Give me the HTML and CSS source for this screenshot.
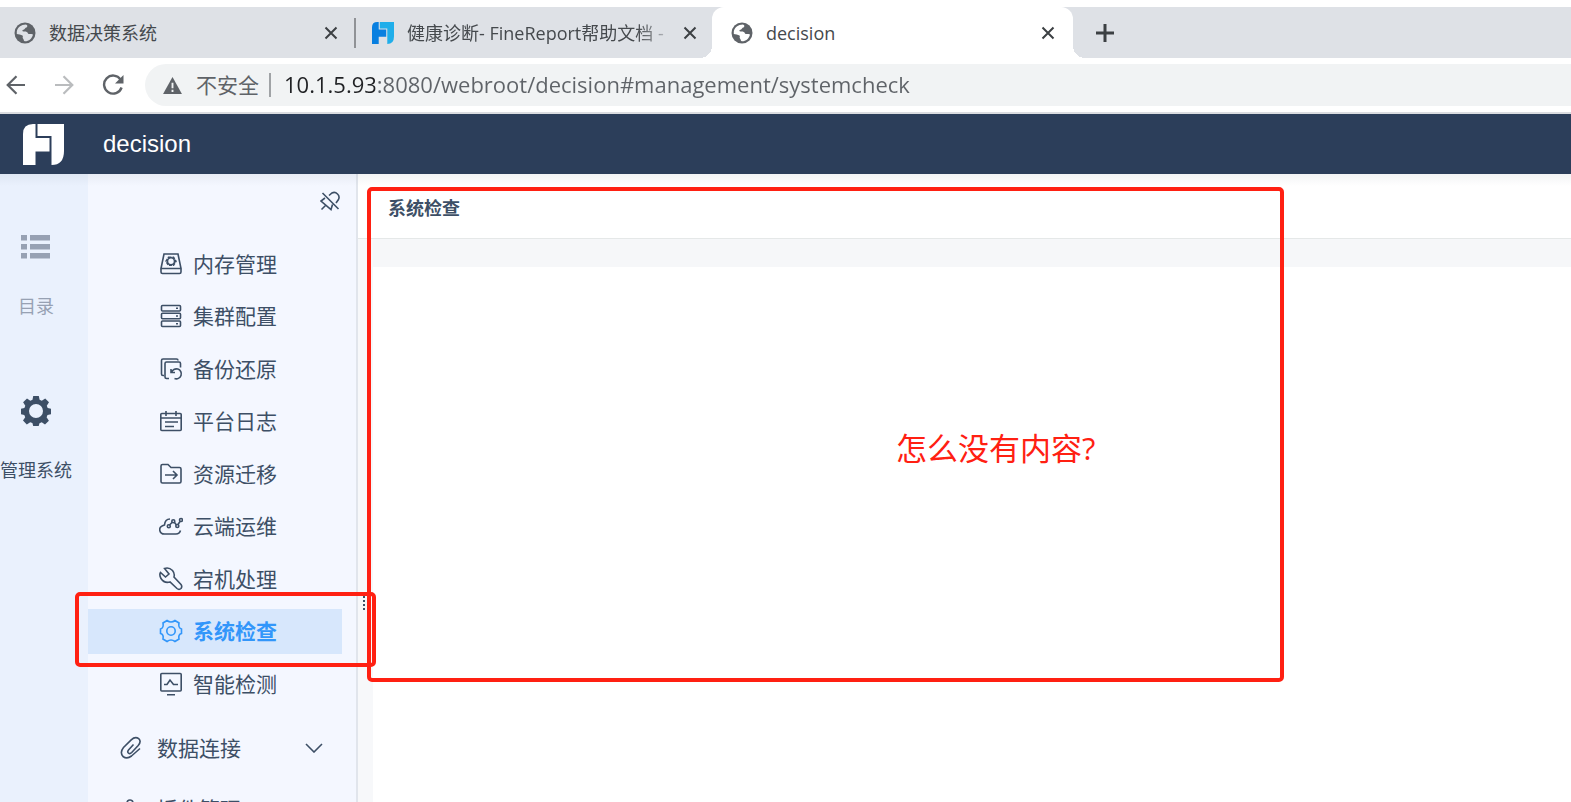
FILE: index.html
```html
<!DOCTYPE html>
<html lang="zh-CN">
<head>
<meta charset="utf-8">
<meta name="viewport" content="width=device-width, initial-scale=1">
<title>decision</title>
<link rel="stylesheet" href="styles.css">
</head>
<body>
<svg class="defs" aria-hidden="true">
  <symbol id="globe" viewBox="0 0 22 22">
    <circle cx="11" cy="11" r="10.5" fill="#5f6368"/>
    <path d="M2.800 9.500C3.500 5.500 7 2.600 12 2.600C14 3.500 13.500 5 12.500 5.500C11 5.500 11 7.500 9.500 7.800C8 8 8 9.300 9.500 9.600C11 9.200 13.500 9.500 14 11.500C14.500 12.500 17 11.500 19 12.500C18 16.500 15 19.300 11 19.300C9.500 19 10 17.500 9 16.500C8 15.500 9.500 14.500 8.500 13.500C7 12.500 4.500 12.500 2.800 12z" fill="var(--land)"/>
  </symbol>
  <symbol id="logo" viewBox="0 0 41 41">
    <path d="M12.500 0v14h14v13.500H12.500V41H0V10Q0 0 10 0z" fill="var(--logo-a)"/>
    <path d="M14.500 0H41v27Q41 41 28.500 41V12H14.500z" fill="var(--logo-b)"/>
  </symbol>
  <symbol id="close" viewBox="0 0 14 14"><path d="M1.500 1.500l11 11m0-11l-11 11" fill="none" stroke="#3c4043" stroke-width="2"/></symbol>
</svg>

<div class="window">
  <div class="tabs" role="tablist">
    <div class="tab tab-divided" role="tab">
      <svg class="favicon"><use href="#globe"/></svg>
      <span class="tab-title">数据决策系统</span>
      <button class="tab-close" aria-label="关闭"><svg><use href="#close"/></svg></button>
    </div>
    <div class="tab" role="tab">
      <svg class="favicon favicon-brand"><use href="#logo"/></svg>
      <span class="tab-title tab-title-fade">健康诊断- FineReport帮助文档 -</span>
      <button class="tab-close" aria-label="关闭"><svg><use href="#close"/></svg></button>
    </div>
    <div class="tab tab-active" role="tab" aria-selected="true">
      <svg class="favicon"><use href="#globe"/></svg>
      <span class="tab-title">decision</span>
      <button class="tab-close" aria-label="关闭"><svg><use href="#close"/></svg></button>
    </div>
    <button class="tab-new" aria-label="新标签页"><svg viewBox="0 0 18 18"><path d="M9 0v18M0 9h18" fill="none" stroke="#3c4043" stroke-width="3"/></svg></button>
  </div>

  <div class="toolbar">
    <button class="nav-button" aria-label="后退"><svg viewBox="0 0 20 20"><path d="M19 10H2M10.500 1.200L1.700 10l8.800 8.800" fill="none" stroke="#5f6368" stroke-width="2.200"/></svg></button>
    <button class="nav-button" aria-label="前进"><svg viewBox="0 0 20 20"><path d="M1 10h17M9.500 1.200l8.800 8.800-8.800 8.800" fill="none" stroke="#babcbe" stroke-width="2.200"/></svg></button>
    <button class="nav-button" aria-label="刷新"><svg class="reload" viewBox="0 0 22 22"><path d="M18.600 5.600A9 9 0 1 0 19.600 13.500" fill="none" stroke="#5f6368" stroke-width="2.400"/><path d="M21.500 1v8.500H13z" fill="#5f6368"/></svg></button>
    <div class="address">
      <svg class="warning" viewBox="0 0 20 18"><path d="M10 0l10 18H0z" fill="#5f6368"/><path d="M10 6v6m0 1.500v2.500" stroke="#f1f3f4" stroke-width="2"/></svg>
      <span class="insecure">不安全</span>
      <input class="url" type="text" aria-label="地址" value="10.1.5.93:8080/webroot/decision#management/systemcheck">
    </div>
  </div>

  <header class="app-header">
    <svg class="app-logo"><use href="#logo"/></svg>
    <span class="app-name">decision</span>
  </header>

  <div class="app-body">
    <nav class="rail" aria-label="主导航">
      <button class="rail-item">
        <svg viewBox="0 0 30 30"><path d="M0 3h6v5.500H0zM9 3h20v5.500H9zM0 12h6v5.500H0zM9 12h20v5.500H9zM0 21h6v5.500H0zM9 21h20v5.500H9z" fill="#97a1b3"/></svg>
        <span>目录</span>
      </button>
      <button class="rail-item rail-item-current">
        <svg viewBox="0 0 30 30"><path fill-rule="evenodd" fill="#3d4f66" d="M12.200 0h5.600l.8 3.800 2.200.9 3.400-2.200 3.800 3.800-2.200 3.400.9 2.200 3.300.8v5.600l-3.500.8-.9 2.200 2.300 3.400-3.900 3.800-3.300-2.200-2.200.9-.8 2.800h-5.500l-.8-2.900-2.200-.9-3.400 2.200-3.800-3.800 2.200-3.300-.9-2.200L0 18.300v-5.500l3.400-.9.9-2.200-2.200-3.400L6 2.500l3.300 2.200 2.200-.9zM15 8a7 7 0 1 0 0 14a7 7 0 1 0 0-14z"/></svg>
        <span>管理系统</span>
      </button>
    </nav>

    <nav class="menu" aria-label="管理系统">
      <button class="unpin" aria-label="取消固定"><svg viewBox="0 0 20 20"><path d="M2.500 1.500l16 16M9 4l3-2.500q3-1.500 5.500 1t1 5.500L16 11.500M5 6.500L1 9.500l10 8.500 1.500-5M5.500 14l-4 4" /></svg></button>
      <ul class="submenu">
        <li><a href="#memory"><svg viewBox="0 0 24 24"><path d="M5 2h14l3 14.500H2zM2 16.500h20v3.500q0 1.500-1.500 1.500h-17Q2 21.500 2 20z"/><path d="M9.500 5.300h5l2.500 4-2.500 4h-5L7 9.300z" stroke-dasharray="3 1"/><circle cx="12" cy="9.300" r="3.500"/></svg>内存管理</a></li>
        <li><a href="#cluster"><svg viewBox="0 0 24 24"><rect x="2.500" y="1.500" width="19" height="5.500" rx="1"/><rect x="2.500" y="9.300" width="19" height="5.500" rx="1"/><rect x="2.500" y="17" width="19" height="5.500" rx="1"/><path d="M17 4.300h2M17 12h2M17 19.800h2"/></svg>集群配置</a></li>
        <li><a href="#backup"><svg viewBox="0 0 24 24"><path d="M5 18.500H4q-1.500 0-1.500-1.500V3.500Q2.500 2 4 2h13.500q1.500 0 1.500 1.500M10 21.500H7.500q-1.500 0-1.500-1.500V6.500Q6 5 7.500 5h12.500q1.500 0 1.500 1.500v4"/><path d="M12 12v3.500h4M12.500 15.500a5 5 0 1 1 3 6"/></svg>备份还原</a></li>
        <li><a href="#logs"><svg viewBox="0 0 24 24"><rect x="1.800" y="4.500" width="20.400" height="17" rx="1"/><path d="M2 9h20M7 2v5M17 2v5M6 13h13M6 17.500h9"/></svg>平台日志</a></li>
        <li><a href="#migrate"><svg viewBox="0 0 24 24"><path d="M3.500 2.500h5.500l3 3h8.500q1.500 0 1.500 1.500v12.500q0 1.500-1.500 1.500h-17Q2 21 2 19.500V4q0-1.500 1.500-1.500zM6 13h12M14 9l4 4-4 4"/></svg>资源迁移</a></li>
        <li><a href="#cloud"><svg viewBox="0 0 24 24"><path d="M11 5Q6 5 5.500 11Q0 12.500.8 16.500Q1.500 20 5.500 20H17q3.500 0 4.500-3.500M10.500 11l3-3M15.500 8.500l2 2.500M19 10.500l2-3"/><circle cx="9.800" cy="12.300" r="1.500"/><circle cx="14.300" cy="7.300" r="1.500"/><circle cx="18.300" cy="12" r="1.500"/><circle cx="22" cy="6" r="1.500"/></svg>云端运维</a></li>
        <li><a href="#crash"><svg viewBox="0 0 24 24"><path d="M5.500 1.500Q10 0 13.500 3.500Q16 6.500 15 10L22 17.500q1.500 2 0 4-2 1.700-4 0L11 15Q5 16.500 2 11.500Q0 8 1.500 5.500l5 4.500 3.500-3z"/></svg>宕机处理</a></li>
        <li><a class="current" href="#check" aria-current="page"><svg viewBox="0 0 24 24"><path d="M8 1.500Q12 4.500 16 1.500L20 4Q19 9 22.500 10V14.500Q19 15.500 20 20L16 22.500Q12 19.500 8 22.500L4 20Q5 15.500 1.500 14.500V10Q5 9 4 4z"/><circle cx="12" cy="12" r="4.200"/></svg>系统检查</a></li>
        <li><a href="#smart"><svg viewBox="0 0 24 24"><rect x="1.800" y="1.500" width="20.400" height="17.500" rx="1"/><path d="M8 22.700h8M5 12.500h3l3-4.500 3.500 4.500H19"/></svg>智能检测</a></li>
      </ul>
      <button class="group"><svg viewBox="0 0 24 24"><path d="M14.500 8.500l-5 5.500q-1.500 2 0 3.200 1.500 1 3.200-.7l6.500-7q3.500-4 .5-6.800-3.500-2.500-7.500 1.200L4.500 11.500Q.5 16.500 4 20.500q4 3 8.500-.5l8.500-7.500"/></svg><span>数据连接</span><svg class="chevron" viewBox="0 0 18 10"><path d="M1 1l8 8 8-8"/></svg></button>
      <button class="group"><svg viewBox="0 0 24 24"><path d="M8 6.500Q8 3 11 3t3 3.500h6V12M2 12V6.500h6M2 12v9h18v-9"/></svg><span>插件管理</span></button>
    </nav>

    <div class="splitter"><span class="grip"></span></div>
    <main class="content">
      <h1 class="content-title">系统检查</h1>
      <section class="content-panel"></section>
    </main>
  </div>
</div>

<div class="mark mark-content"></div>
<div class="mark mark-menu"></div>
<p class="note">怎么没有内容?</p>
</body>
</html>
```
FILE: styles.css
```css
* { box-sizing: border-box; }

body {
  --ink: #3d4f66;
  --red: #ff2012;
  margin: 0;
  position: relative;
  height: 100vh;
  overflow: hidden;
  background: #fff;
  color: var(--ink);
  font-family: "Open Sans", "Noto Sans CJK SC", sans-serif;
  font-size: 18px;
}

button {
  border: 0;
  padding: 0;
  background: none;
  color: inherit;
  font: inherit;
}

svg { display: block; flex: none; }
.defs { position: absolute; width: 0; height: 0; }

.window {
  display: flex;
  flex-direction: column;
  height: 100%;
  padding-top: 7px;
}

/* Browser tabs */
.tabs {
  display: flex;
  flex: none;
  height: 51px;
  background: #dee1e6;
  color: #45494d;
}

.tab {
  --land: #dee1e6;
  display: flex;
  align-items: center;
  gap: 13px;
  width: 356px;
  padding: 0 14px;
}

.tab-divided {
  background: linear-gradient(#909296, #909296) right center / 2px 30px no-repeat;
}

.tab + .tab { padding: 0 11px 0 16px; }
.tab.tab-active {
  --land: #fff;
  width: 361px;
  padding: 0 14px 0 19px;
  position: relative;
  border-radius: 12px 12px 0 0;
  background: #fff;
}

.tab-active::before,
.tab-active::after {
  content: "";
  position: absolute;
  bottom: 0;
  width: 12px;
  height: 12px;
}
.tab-active::before { right: 100%; background: radial-gradient(circle at 0 0, transparent 12px, #fff 12px); }
.tab-active::after { left: 100%; background: radial-gradient(circle at 100% 0, transparent 12px, #fff 12px); }

.favicon { width: 22px; height: 22px; }
.favicon-brand { --logo-a: #087fe0; --logo-b: #20aeea; }

.tab-title {
  flex: 1;
  white-space: nowrap;
  line-height: 28px;
}

.tab-title-fade {
  mask-image: linear-gradient(to right, #000 230px, transparent 270px);
}

.tab-close { padding: 4px; }
.tab-close svg { width: 14px; height: 14px; }
.tab-new { padding: 0 23px; }
.tab-new svg { width: 18px; height: 18px; }

/* Address bar */
.toolbar {
  display: flex;
  flex: none;
  align-items: center;
  height: 56px;
  padding-left: 6px;
  border-bottom: 2px solid #dadce0;
}

.nav-button { width: 48px; }
.nav-button svg { width: 20px; height: 20px; }
.nav-button .reload { width: 22px; height: 22px; }
.nav-button:nth-child(3) { width: 43px; }

.address {
  display: flex;
  flex: 1;
  align-items: center;
  height: 42px;
  padding-left: 18px;
  border-radius: 21px 0 0 21px;
  background: #f1f3f4;
  color: #5f6368;
}

.warning { width: 19px; height: 17px; }
.insecure {
  margin-left: 14px;
  padding-right: 10px;
  border-right: 2px solid #a0a3a6;
  font-size: 21px;
  line-height: 24px;
}

.url {
  flex: 1;
  min-width: 0;
  height: 40px;
  margin-left: 13px;
  padding: 0 0 2px;
  border: 0;
  outline: 0;
  background: linear-gradient(to right, #202124 91px, #5f6368 91px);
  background-clip: text;
  -webkit-background-clip: text;
  color: #5f6368;
  -webkit-text-fill-color: transparent;
  font: 22px "Open Sans", sans-serif;
}

/* Application */
.app-header {
  display: flex;
  flex: none;
  align-items: center;
  gap: 39px;
  height: 60px;
  padding-left: 23px;
  background: #2c3e5a;
  color: #fff;
}

.app-logo { --logo-a: #fff; --logo-b: #fff; width: 41px; height: 41px; }
.app-name { font: 24px/28px "Liberation Sans", sans-serif; }

.app-body {
  position: relative;
  display: flex;
  flex: 1;
  min-height: 0;
  overflow: hidden;
}

.app-body::before {
  content: "";
  position: absolute;
  inset: 0 0 auto;
  height: 12px;
  background: linear-gradient(rgba(44, 62, 90, .06), transparent);
}

.rail {
  display: flex;
  flex: none;
  flex-direction: column;
  align-items: flex-start;
  gap: 75px;
  width: 88px;
  padding-top: 58px;
  background: #eaf1fd;
}

.rail-item {
  display: flex;
  flex-direction: column;
  align-items: center;
  gap: 29px;
  width: 72px;
  color: #97a1b3;
  line-height: 30px;
  white-space: nowrap;
}

.rail-item svg { width: 30px; height: 30px; }
.rail-item-current { color: var(--ink); }

.menu {
  flex: none;
  width: 270px;
  border-right: 2px solid #e1e5ec;
  background: #f4f7ff;
  font-size: 21px;
  line-height: 28px;
}

.menu svg {
  width: 24px;
  height: 24px;
  fill: none;
  stroke: currentColor;
  stroke-width: 1.6;
}

.unpin { display: block; margin: 17px 16px 0 auto; }
.menu .unpin svg { width: 20px; height: 21px; }

.submenu {
  display: flex;
  flex-direction: column;
  justify-content: space-between;
  height: 465px;
  margin: 29px 14px 19px 0;
  padding: 0;
  list-style: none;
}

.submenu a {
  display: flex;
  align-items: center;
  gap: 10px;
  height: 45px;
  padding-left: 71px;
  color: inherit;
  text-decoration: none;
}

.submenu .current {
  background: #d7e7fc;
  color: #3296fa;
  font-weight: 700;
}

.group {
  display: flex;
  align-items: center;
  width: 100%;
  height: 45px;
  margin-bottom: 16px;
  padding: 0 33px 0 31px;
  gap: 14px;
}

.menu .chevron { width: 18px; height: 10px; margin-left: auto; }

.splitter {
  display: flex;
  flex: none;
  align-items: center;
  width: 15px;
  margin-top: 65px;
  background: #f7f8fa;
}

.grip {
  height: 14px;
  margin: 164px 0 0 5px;
  border-left: 2px dotted var(--ink);
}

.content {
  display: flex;
  flex: 1;
  flex-direction: column;
  min-width: 0;
  background: #f6f7f9;
}

.content-title {
  height: 65px;
  margin: 0 0 28px -15px;
  padding: 20px 0 0 30px;
  border-bottom: 1px solid #e5e8e8;
  background: #fff;
  font-size: 18px;
  line-height: 28px;
}

.content-panel { flex: 1; background: #fff; }

/* Annotations over the page */
.mark {
  position: absolute;
  border: 4px solid var(--red);
  border-radius: 5px;
}
.mark-content { left: 367px; top: 187px; width: 917px; height: 495px; }
.mark-menu { left: 75px; top: 592px; width: 301px; height: 75px; }

.note {
  position: absolute;
  left: 896px;
  top: 428px;
  margin: 0;
  color: var(--red);
  font-size: 31px;
  line-height: 40px;
}
```
